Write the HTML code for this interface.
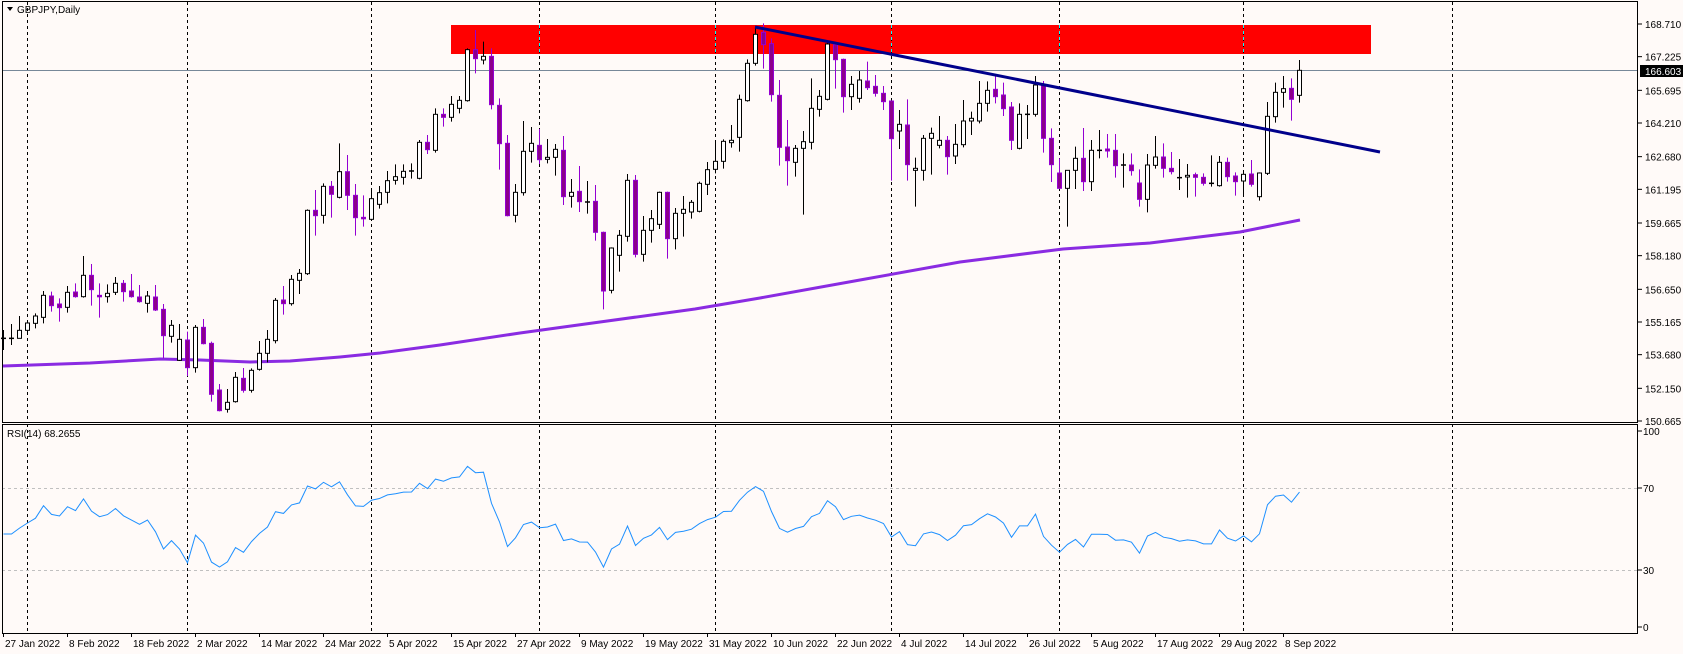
<!DOCTYPE html>
<html><head><meta charset="utf-8"><style>
html,body{margin:0;padding:0;background:#fffaf8;}
svg{display:block;font-family:"Liberation Sans","DejaVu Sans",sans-serif;font-size:10px;}
</style></head><body>
<svg id="s" width="1683" height="654" xmlns="http://www.w3.org/2000/svg"></svg>
<script>
var A=[[565,565,540,600],[565,565,522,585],[565,541,498,565],[541,519,510,555],[520,498,490,535],[502,436,423,520],[438,467,425,485],[462,473,445,515],[472,427,408,488],[426,440,400,443],[440,376,318,443],[376,419,342,467],[436,440,400,503],[440,430,403,458],[427,400,381,435],[400,425,390,455],[423,440,372,443],[441,455,405,458],[460,438,423,488],[441,480,405,483],[478,557,462,625],[559,526,510,578],[631,568,522,633],[570,653,545,678],[653,532,525,668],[532,581,507,583],[580,733,575,755],[720,782,702,784],[778,757,717,788],[755,682,666,758],[685,721,654,728],[721,661,655,728],[658,610,573,662],[610,568,540,637],[572,451,444,580],[450,461,408,494],[461,388,375,467],[391,370,357,432],[371,181,178,375],[181,197,120,257],[196,109,100,221],[109,133,93,203],[142,65,-20,145],[65,136,15,180],[136,203,102,257],[202,206,136,230],[208,146,115,210],[163,128,108,176],[127,92,63,160],[91,80,43,104],[82,64,43,104],[63,63,40,86]];
var B=[[505,397,390,508],[397,419,375,432],[421,313,295,428],[313,322,295,350],[322,283,258,335],[295,271,258,310],[272,119,115,275],[119,146,60,190],[150,139,95,163],[139,284,115,298],[286,401,265,479],[400,617,375,619],[616,547,522,637],[548,424,333,557],[424,400,351,458],[406,449,357,462],[448,442,387,460],[442,418,402,497],[421,560,378,585],[559,547,507,593],[544,575,468,606],[576,576,513,611],[574,667,525,692],[667,843,665,898],[841,714,712,850],[736,676,660,785],[679,511,492,695],[511,733,495,742],[733,661,618,755],[661,626,600,698],[643,547,545,657],[547,686,545,746],[686,610,594,718],[610,598,558,680],[606,577,570,626],[604,520,515,607],[523,479,456,555],[478,454,390,490],[454,394,388,476],[398,391,345,413],[382,268,254,425],[272,160,148,275],[160,73,50,167],[67,104,40,176],[101,254,85,275],[256,412,210,467],[411,452,330,527],[457,415,405,500],[415,395,363,614],[397,295,205,418],[298,259,240,320],[268,102,99,271],[104,149,96,236],[148,260,146,308],[260,223,198,300]];
var C=[[265,210,183,278],[213,233,155,240],[229,250,195,260],[250,275,228,300],[273,386,271,512],[363,343,300,417],[345,464,268,512],[481,475,443,590],[481,385,375,512],[385,370,353,494],[406,391,318,415],[391,440,378,494],[438,403,342,462],[404,333,270,412],[333,325,305,375],[333,280,213,340],[280,241,214,305],[238,260,195,280],[255,296,218,318],[291,391,276,420],[415,313,280,418],[313,313,285,387],[313,225,198,320],[225,385,213,428],[385,464,355,516],[489,535,445,537],[535,481,481,650],[481,445,410,537],[445,515,354,543],[515,421,390,543],[421,421,360,445],[417,423,372,443],[421,467,372,503],[465,465,430,533],[465,482,430,497],[519,568,478,590],[568,465,432,607],[466,441,378,476],[441,475,400,503],[475,485,426,493],[503,503,447,540],[501,496,462,563],[494,502,488,560],[502,520,490,527],[520,520,436,530],[527,457,438,530],[457,500,443,515],[498,515,487,557],[513,493,480,560],[492,523,450,530],[560,489,487,572],[490,319,276,495],[320,247,218,338],[247,236,198,293],[235,268,205,332],[256,181,150,278]];
var bars=[];
A.forEach(function(r){bars.push(r.map(function(v){return 150+v/3;}));});
B.forEach(function(r){bars.push(r.map(function(v){return 10+v/3;}));});
C.forEach(function(r){bars.push(r.map(function(v){return 10+v/3;}));});
var h='';
function L(x1,y1,x2,y2,st){h+='<line x1="'+x1+'" y1="'+y1+'" x2="'+x2+'" y2="'+y2+'" style="'+st+'"/>';}
function T(x,y,t,st){h+='<text x="'+x+'" y="'+y+'" style="'+(st||'')+'">'+t+'</text>';}
h+='<rect x="451" y="25" width="920" height="29" fill="#ff0000"/>';
[27,187,371,539,715,891,1059,1243,1452].forEach(function(x){
 L(x+0.5,2,x+0.5,422,'stroke:#000;stroke-dasharray:3,3;stroke-width:1');
 L(x+0.5,424,x+0.5,633,'stroke:#000;stroke-dasharray:3,3;stroke-width:1');
 if(x>451&&x<1371)L(x+0.5,25,x+0.5,54,'stroke:#00ffff;stroke-dasharray:3,3;stroke-width:1');
});
L(2,488.5,1638,488.5,'stroke:#c0c0c0;stroke-dasharray:3,3');
L(2,570.5,1638,570.5,'stroke:#c0c0c0;stroke-dasharray:3,3');
L(2,70.5,1638,70.5,'stroke:#778899;stroke-width:1');
var ma=[[3,366],[90,363],[160,359],[200,360],[250,362],[290,361],[340,357],[380,353],[440,345],[520,333],[600,322],[695,309],[760,298],[860,280],[960,262],[1063,249],[1150,243],[1240,232],[1300,220]];
h+='<polyline fill="none" stroke="#8a2be2" stroke-width="3" points="'+ma.map(function(p){return p.join(',');}).join(' ')+'"/>';
bars.forEach(function(b,i){
 var x=3+8*i+0.5,o=b[0],c=b[1],t=b[2],bo=b[3];
 var bull=c<=o;
 var top=Math.min(o,c),bot=Math.max(o,c);
 if(bull){
  L(x,t,x,bo,'stroke:#000');
  if(bot-top<1.5){L(x-2.5,top,x+2.5,top,'stroke:#000;stroke-width:1.5');}
  else h+='<rect x="'+(x-2)+'" y="'+top+'" width="4" height="'+(bot-top)+'" fill="#fff" stroke="#000" stroke-width="1"/>';
 }else{
  L(x,t,x,bo,'stroke:#9400d3');
  h+='<rect x="'+(x-2)+'" y="'+top+'" width="4" height="'+Math.max(bot-top,1.5)+'" fill="#8b008b" stroke="#9400d3" stroke-width="1"/>';
 }
});
L(755,27,1380,152,'stroke:#00008b;stroke-width:3');
var ag=5.5,al=6.0,pts=[];
for(var i=0;i<bars.length;i++){
 if(i>0){var d=bars[i-1][1]-bars[i][1];var g=d>0?d:0,l=d<0?-d:0;ag=(ag*13+g)/14;al=(al*13+l)/14;}
 var r=100-100/(1+ag/al);
 pts.push((3.5+8*i)+','+(632-r*2.05).toFixed(1));
}
h+='<polyline fill="none" stroke="#1e90ff" stroke-width="1" points="'+pts.join(' ')+'"/>';
h+='<rect x="2.5" y="1.5" width="1635" height="421" fill="none" stroke="#000" stroke-width="1"/>';
h+='<rect x="2.5" y="424.5" width="1635" height="209" fill="none" stroke="#000" stroke-width="1"/>';
var pl=['168.710','167.225','165.695','164.210','162.680','161.195','159.665','158.180','156.650','155.165','153.680','152.150','150.665'];
pl.forEach(function(p){var y=24+(168.710-parseFloat(p))*22.0;L(1638,y,1642,y,'stroke:#000');T(1645,y+4,p);});
h+='<rect x="1640" y="65" width="43" height="12" fill="#000"/>';
T(1645,75,'166.603','fill:#fff');
[[100,431],[70,488],[30,570],[0,627]].forEach(function(a){L(1638,a[1],1642,a[1],'stroke:#000');T(1643,a[1]+4,a[0]);});
var ds=['27 Jan 2022','8 Feb 2022','18 Feb 2022','2 Mar 2022','14 Mar 2022','24 Mar 2022','5 Apr 2022','15 Apr 2022','27 Apr 2022','9 May 2022','19 May 2022','31 May 2022','10 Jun 2022','22 Jun 2022','4 Jul 2022','14 Jul 2022','26 Jul 2022','5 Aug 2022','17 Aug 2022','29 Aug 2022','8 Sep 2022'];
ds.forEach(function(d,k){var x=3+64*k;L(x+0.5,633,x+0.5,637,'stroke:#000');T(x+2,647,d);});
h+='<path d="M7 7 L13 7 L10 11 Z" fill="#000"/>';
T(17,13,'GBPJPY,Daily');
T(7,437,'RSI(14) 68.2655');
document.getElementById('s').innerHTML=h;
</script>
</body></html>
